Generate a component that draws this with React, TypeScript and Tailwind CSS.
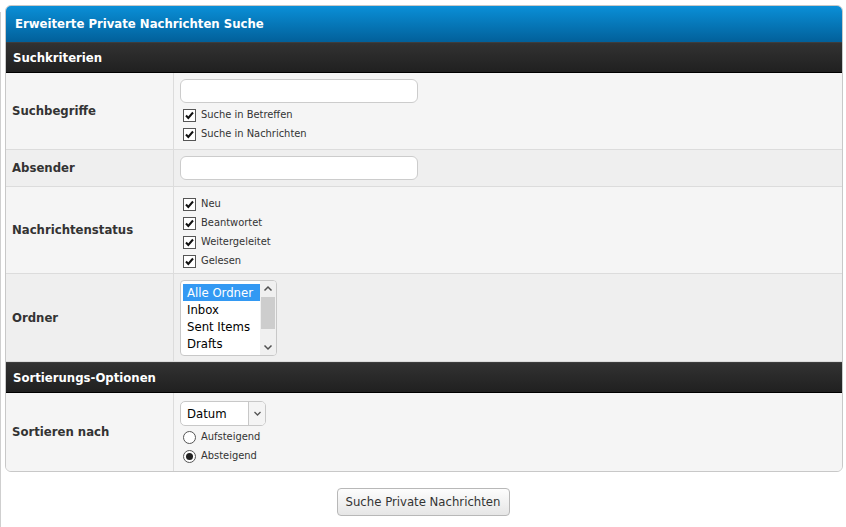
import React from "react";

const font = { fontFamily: '"DejaVu Sans Condensed", "DejaVu Sans", Tahoma, sans-serif' };

const CheckBox = ({ label }: { label: string }) => (
  <div className="flex h-[19px] items-center">
    <span className="ml-[3px] flex h-[13px] w-[13px] items-center justify-center border border-[#555] bg-white">
      <svg width="11" height="11" viewBox="0 0 11 11">
        <path d="M2 5.5 L4.3 8 L9 2.5" fill="none" stroke="#111" strokeWidth="2" />
      </svg>
    </span>
    <span className="ml-[5px] text-[11px] text-[#333]">{label}</span>
  </div>
);

const Radio = ({ label, checked }: { label: string; checked?: boolean }) => (
  <div className="flex h-[19px] items-center">
    <span className="ml-[3px] flex h-[13px] w-[13px] items-center justify-center rounded-full border border-[#555] bg-white">
      {checked && <span className="h-[7px] w-[7px] rounded-full bg-[#222]" />}
    </span>
    <span className="ml-[5px] text-[11px] text-[#333]">{label}</span>
  </div>
);

const TextInput = () => (
  <div className="h-[24px] w-[238px] rounded-[6px] border border-[#ccc] bg-white" />
);

const Row = ({
  label,
  bg,
  children,
  className,
}: {
  label: string;
  bg: string;
  children: React.ReactNode;
  className?: string;
}) => (
  <div className={`grid grid-cols-[168px_1fr] border-b border-[#dcdcdc] ${bg}`}>
    <div className="flex items-center border-r border-[#dcdcdc] pl-[6px] text-[13px] font-bold text-[#333]">
      {label}
    </div>
    <div className={`pl-[6px] ${className ?? ""}`}>{children}</div>
  </div>
);

const SectionHead = ({ title }: { title: string }) => (
  <div className="flex h-[31px] items-center border-b border-[#000] border-t border-t-[#3d3d3d] bg-[linear-gradient(#323232,#202020)] pl-[7px] text-[13px] font-bold text-white">
    {title}
  </div>
);

export default function App() {
  const folders = ["Alle Ordner", "Inbox", "Sent Items", "Drafts"];
  return (
    <div
      className="min-h-[527px] bg-white bg-[linear-gradient(to_right,#cfcfcf_0,#cfcfcf_1px,transparent_1px)] bg-[length:2px_100%] bg-[position:0_12px] bg-no-repeat pt-[5px]"
      style={font}
    >
      <div className="ml-[5px] w-[838px] overflow-hidden rounded-[6px] border border-[#c8c8c8] bg-[#f5f5f5]">
        <div className="flex h-[36px] items-center bg-[linear-gradient(#0a8fd7,#02609a)] pl-[9px] text-[13px] font-bold text-white">
          Erweiterte Private Nachrichten Suche
        </div>
        <SectionHead title="Suchkriterien" />

        <Row label="Suchbegriffe" bg="bg-[#f5f5f5]" className="pb-[5px] pt-[6px]">
          <TextInput />
          <div className="mt-[3px]">
            <CheckBox label="Suche in Betreffen" />
            <CheckBox label="Suche in Nachrichten" />
          </div>
        </Row>

        <Row label="Absender" bg="bg-[#efefef]" className="pb-[6px] pt-[6px]">
          <TextInput />
        </Row>

        <Row label="Nachrichtenstatus" bg="bg-[#f5f5f5]" className="pb-[2px] pt-[8px]">
          <CheckBox label="Neu" />
          <CheckBox label="Beantwortet" />
          <CheckBox label="Weitergeleitet" />
          <CheckBox label="Gelesen" />
        </Row>

        <Row label="Ordner" bg="bg-[#efefef]" className="pb-[5px] pt-[6px]">
          <div className="flex h-[76px] w-[97px] overflow-hidden rounded-[4px] border border-[#c8c8c8] bg-white">
            <div className="flex-1 pl-[2px] pt-[3px]">
              {folders.map((f, i) => (
                <div
                  key={f}
                  className={`h-[17px] pl-[4px] text-[13px] leading-[17px] ${
                    i === 0 ? "bg-[#3399f3] text-white" : "text-black"
                  }`}
                >
                  {f}
                </div>
              ))}
            </div>
            <div className="flex w-[16px] flex-col items-center bg-[#f0f0f0]">
              <svg width="16" height="16" viewBox="0 0 16 16">
                <path d="M4.5 9.5 L8 6 L11.5 9.5" fill="none" stroke="#505050" strokeWidth="1.5" />
              </svg>
              <div className="h-[32px] w-[14px] bg-[#cdcdcd]" />
              <div className="flex-1" />
              <svg width="16" height="16" viewBox="0 0 16 16">
                <path d="M4.5 6.5 L8 10 L11.5 6.5" fill="none" stroke="#505050" strokeWidth="1.5" />
              </svg>
            </div>
          </div>
        </Row>

        <SectionHead title="Sortierungs-Optionen" />

        <div className="grid grid-cols-[168px_1fr] bg-[#f5f5f5]">
          <div className="flex items-center border-r border-[#dcdcdc] pl-[6px] text-[13px] font-bold text-[#333]">
            Sortieren nach
          </div>
          <div className="pb-[5px] pl-[6px] pt-[8px]">
            <div className="flex h-[25px] w-[86px] overflow-hidden rounded-[5px] border border-[#c8c8c8] bg-white">
              <div className="flex flex-1 items-center pl-[6px] text-[13px] text-black">Datum</div>
              <div className="flex w-[17px] items-center justify-center border-l border-[#c8c8c8] bg-[#f4f4f4]">
                <svg width="9" height="9" viewBox="0 0 9 9">
                  <path d="M1.5 3 L4.5 6 L7.5 3" fill="none" stroke="#555" strokeWidth="1.3" />
                </svg>
              </div>
            </div>
            <div className="mt-[2px]">
              <Radio label="Aufsteigend" />
              <Radio label="Absteigend" checked />
            </div>
          </div>
        </div>
      </div>

      <div className="mt-[16px] flex justify-center">
        <button className="h-[28px] w-[173px] rounded-[4px] border border-[#b8b8b8] bg-[linear-gradient(#fdfdfd,#e6e6e6)] text-[13px] text-[#333]">
          Suche Private Nachrichten
        </button>
      </div>
    </div>
  );
}
